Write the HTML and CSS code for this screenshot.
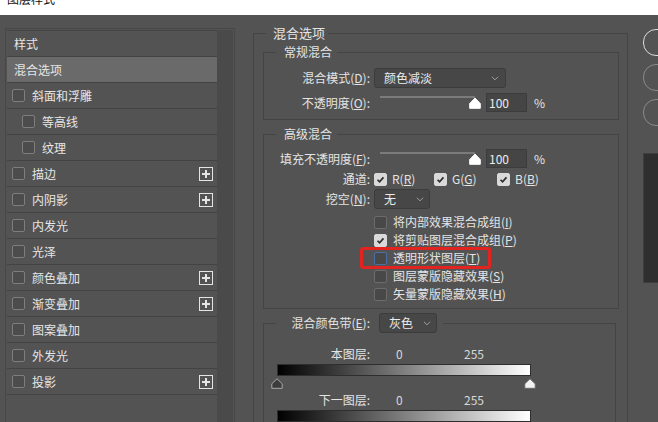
FILE: index.html
```html
<!DOCTYPE html>
<html lang="zh-CN">
<head>
<meta charset="utf-8">
<title>图层样式</title>
<link rel="stylesheet" href="styles.css">
</head>
<body>
<div class="titlebar"><div class="title">图层样式</div></div>
<div class="dialog">
  <aside class="styles-panel">
    <div class="list">
      <div class="row header">样式</div>
      <div class="row selected">混合选项</div>
      <div class="row"><span class="cb"></span><span class="lbl">斜面和浮雕</span></div>
      <div class="row sub"><span class="cb"></span><span class="lbl">等高线</span></div>
      <div class="row sub"><span class="cb"></span><span class="lbl">纹理</span></div>
      <div class="row"><span class="cb"></span><span class="lbl">描边</span><svg class="plus" viewBox="0 0 14 14"><rect x="0.5" y="0.5" width="13" height="13"/><path d="M3 7H11M7 3V11"/></svg></div>
      <div class="row"><span class="cb"></span><span class="lbl">内阴影</span><svg class="plus" viewBox="0 0 14 14"><rect x="0.5" y="0.5" width="13" height="13"/><path d="M3 7H11M7 3V11"/></svg></div>
      <div class="row"><span class="cb"></span><span class="lbl">内发光</span></div>
      <div class="row"><span class="cb"></span><span class="lbl">光泽</span></div>
      <div class="row"><span class="cb"></span><span class="lbl">颜色叠加</span><svg class="plus" viewBox="0 0 14 14"><rect x="0.5" y="0.5" width="13" height="13"/><path d="M3 7H11M7 3V11"/></svg></div>
      <div class="row"><span class="cb"></span><span class="lbl">渐变叠加</span><svg class="plus" viewBox="0 0 14 14"><rect x="0.5" y="0.5" width="13" height="13"/><path d="M3 7H11M7 3V11"/></svg></div>
      <div class="row"><span class="cb"></span><span class="lbl">图案叠加</span></div>
      <div class="row"><span class="cb"></span><span class="lbl">外发光</span></div>
      <div class="row"><span class="cb"></span><span class="lbl">投影</span><svg class="plus" viewBox="0 0 14 14"><rect x="0.5" y="0.5" width="13" height="13"/><path d="M3 7H11M7 3V11"/></svg></div>
    </div>
    <div class="scroll"></div>
  </aside>

  <main class="options">
    <fieldset class="fs-main">
      <legend class="lg-main">混合选项</legend>

      <fieldset class="fs fs-normal">
        <legend class="lg">常规混合</legend>
        <div class="frow r-mode">
          <span class="flabel">混合模式(<u>D</u>):</span>
          <div class="select sel-mode"><span>颜色减淡</span><svg class="chev" viewBox="0 0 9 5"><polyline points="1,0.5 4.5,4 8,0.5"/></svg></div>
        </div>
        <div class="frow r-num">
          <span class="flabel">不透明度(<u>O</u>):</span>
          <div class="slider"><div class="track"></div><svg class="thumb" viewBox="0 0 12 12"><path d="M6 1 L11.3 6.6 V11.3 H0.7 V6.6 Z"/></svg></div>
          <div class="num">100</div>
          <span class="pct">%</span>
        </div>
      </fieldset>

      <fieldset class="fs fs-adv">
        <legend class="lg">高级混合</legend>
        <div class="frow r-num r-fill">
          <span class="flabel">填充不透明度(<u>F</u>):</span>
          <div class="slider"><div class="track"></div><svg class="thumb" viewBox="0 0 12 12"><path d="M6 1 L11.3 6.6 V11.3 H0.7 V6.6 Z"/></svg></div>
          <div class="num">100</div>
          <span class="pct">%</span>
        </div>
        <div class="frow r-chan">
          <span class="flabel">通道:</span>
          <div class="chans">
            <span class="chan"><span class="ck on"><svg viewBox="0 0 13 13"><path d="M3 6.8 L5.4 9.2 L10 4"/></svg></span><span>R(<u>R</u>)</span></span>
            <span class="chan"><span class="ck on"><svg viewBox="0 0 13 13"><path d="M3 6.8 L5.4 9.2 L10 4"/></svg></span><span>G(<u>G</u>)</span></span>
            <span class="chan"><span class="ck on"><svg viewBox="0 0 13 13"><path d="M3 6.8 L5.4 9.2 L10 4"/></svg></span><span>B(<u>B</u>)</span></span>
          </div>
        </div>
        <div class="frow r-knock">
          <span class="flabel">挖空(<u>N</u>):</span>
          <div class="select sel-knock"><span>无</span><svg class="chev" viewBox="0 0 9 5"><polyline points="1,0.5 4.5,4 8,0.5"/></svg></div>
        </div>
        <div class="cblist">
          <div class="cbrow"><span class="ck"></span><span>将内部效果混合成组(<u>I</u>)</span></div>
          <div class="cbrow"><span class="ck on"><svg viewBox="0 0 13 13"><path d="M3 6.8 L5.4 9.2 L10 4"/></svg></span><span>将剪贴图层混合成组(<u>P</u>)</span></div>
          <div class="cbrow marked"><span class="ck focus"></span><span>透明形状图层(<u>T</u>)</span><span class="highlight"></span></div>
          <div class="cbrow"><span class="ck"></span><span>图层蒙版隐藏效果(<u>S</u>)</span></div>
          <div class="cbrow"><span class="ck"></span><span>矢量蒙版隐藏效果(<u>H</u>)</span></div>
        </div>
      </fieldset>

      <fieldset class="fs fs-band">
        <legend class="lg-band">
          <span class="blabel">混合颜色带(<u>E</u>):</span>
          <span class="select sel-band"><span>灰色</span><svg class="chev" viewBox="0 0 9 5"><polyline points="1,0.5 4.5,4 8,0.5"/></svg></span>
        </legend>
        <div class="frow r-val">
          <span class="flabel">本图层:</span>
          <span class="v0">0</span><span class="v255">255</span>
        </div>
        <div class="gbar"></div>
        <div class="handles">
          <svg class="h-dark" viewBox="0 0 12 11"><path d="M6 0.8 L11.2 5.8 V10.3 H0.8 V5.8 Z"/></svg>
          <svg class="h-light" viewBox="0 0 12 11"><path d="M6 0.8 L11.2 5.8 V10.3 H0.8 V5.8 Z"/></svg>
        </div>
        <div class="frow r-val r-val2">
          <span class="flabel">下一图层:</span>
          <span class="v0">0</span><span class="v255">255</span>
        </div>
        <div class="gbar"></div>
      </fieldset>
    </fieldset>
  </main>

  <div class="actions">
    <div class="btn default" role="button" aria-label="确定"></div>
    <div class="btn" role="button" aria-label="取消"></div>
    <div class="btn" role="button" aria-label="新建样式"></div>
    <div class="preview"></div>
  </div>
</div>
</body>
</html>
```
FILE: styles.css
```css
html, body {
  margin: 0;
  padding: 0;
  width: 658px;
  height: 422px;
  overflow: hidden;
  background: #535353;
}
body {
  font-family: "Noto Sans CJK SC", "Noto Sans", sans-serif;
  font-size: 12px;
  line-height: 16px;
  color: #e4e4e4;
}
u { text-underline-offset: 1px; }

.titlebar {
  height: 15px;
  background: #ffffff;
  overflow: hidden;
}
.title {
  margin-top: -8px;
  padding-left: 7px;
  line-height: 14px;
  color: #111;
  font-size: 12px;
}

.dialog {
  display: flex;
  align-items: flex-start;
}

/* left styles list */
.styles-panel {
  flex: 0 0 auto;
  display: flex;
  margin: 13px 0 0 5px;
  padding: 1px 0 0 1px;
  width: 227px;
  height: 400px;
  border: 1px solid #474747;
  border-bottom: none;
}
.list {
  width: 210px;
  border-top: 1px solid #444444;
  background: #535353;
}
.scroll {
  width: 16px;
  background: #4a4a4a;
}
.row {
  height: 25px;
  border-bottom: 1px solid #434343;
  display: flex;
  align-items: center;
  padding-left: 5px;
  color: #e6e6e6;
}
.row.header, .row.selected { padding-left: 7px; }
.row.selected { background: #6a6a6a; }
.row.sub { padding-left: 15px; }
.cb {
  width: 11px;
  height: 11px;
  border: 1px solid #7e7e7e;
  border-radius: 2px;
  background: #4c4c4c;
}
.lbl { margin-left: 7px; }
.plus {
  margin-left: auto;
  margin-right: 4px;
  width: 14px;
  height: 14px;
  fill: none;
  stroke: #e4e4e4;
}
.plus path { stroke-width: 2; }

/* main options */
.options {
  flex: 0 0 auto;
  margin-left: 18px;
  width: 375px;
}
fieldset {
  margin: 0;
  padding: 0;
  min-inline-size: 0;
  border: 1px solid #444444;
}
legend { padding: 0; line-height: 16px; }
.fs-main {
  margin-top: 10px;
  min-height: 420px;
  border-bottom: none;
}
.lg-main {
  margin-left: 12px;
  padding: 0 3px 0 7px;
  font-size: 13px;
}
.fs {
  margin: 3px 8px 0 9px;
}
.lg {
  margin-left: 12px;
  padding: 0 5px 0 8px;
}
.fs-normal { padding-bottom: 7px; }
.fs-adv { margin-top: 6px; padding-bottom: 5px; }
.fs-band { margin-top: 4px; margin-right: 11px; }

.frow {
  display: flex;
  align-items: center;
}
.flabel {
  width: 106px;
  text-align: right;
  flex: 0 0 auto;
}
.r-mode { margin-top: 8px; height: 20px; }
.r-num { margin-top: 5px; height: 19px; }
.r-fill { margin-top: 7px; }
.r-chan { margin-top: 2px; height: 18px; }
.r-knock { margin-top: 1px; height: 20px; }

.select {
  box-sizing: border-box;
  height: 20px;
  display: flex;
  align-items: center;
  background: #474747;
  border: 1px solid #3c3c3c;
  border-radius: 3px;
  color: #ececec;
}
.chev {
  width: 8px;
  height: 5px;
  margin-left: auto;
  fill: none;
  stroke: #ababab;
  stroke-width: 1;
}
.sel-mode {
  margin-left: 4px;
  width: 132px;
  padding: 0 6px 0 9px;
}
.sel-knock {
  margin-left: 4px;
  width: 56px;
  padding: 0 5px 0 9px;
}

.slider {
  position: relative;
  margin-left: 10px;
  width: 101px;
  height: 13px;
}
.track {
  width: 95px;
  height: 2px;
  background: #7b7b7b;
}
.thumb {
  position: absolute;
  right: 0;
  top: 1px;
  width: 12px;
  height: 12px;
  fill: #ffffff;
  stroke: #ffffff;
  stroke-linejoin: round;
}
.num {
  box-sizing: border-box;
  margin-left: 5px;
  width: 41px;
  height: 19px;
  padding-left: 2px;
  line-height: 17px;
  background: #454545;
  border: 1px solid #3c3c3c;
  color: #ececec;
}
.pct { margin-left: 7px; }

.chans {
  margin-left: 4px;
  display: grid;
  grid-template-columns: 60px 63px auto;
}
.chan {
  display: flex;
  align-items: center;
}
.chan > span:last-child { margin-left: 5px; }

.ck {
  box-sizing: border-box;
  width: 13px;
  height: 13px;
  border: 1px solid #6c6c6c;
  border-radius: 2px;
  background: #484848;
  display: flex;
  flex: 0 0 auto;
}
.ck svg {
  width: 11px;
  height: 11px;
  fill: none;
  stroke: #2c2c2c;
  stroke-width: 2;
}
.ck.on {
  background: #d9d9d9;
  border-color: #d9d9d9;
}
.ck.focus { border-color: #4a6ea8; }

.cblist { margin-top: 4px; }
.cbrow {
  height: 18px;
  display: flex;
  align-items: center;
  padding-left: 110px;
}
.cbrow > span:nth-child(2) { margin-left: 6px; }
.cbrow.marked { position: relative; }
.highlight {
  position: absolute;
  left: 96px;
  top: -2px;
  width: 131px;
  height: 22px;
  box-sizing: border-box;
  border: 3px solid #e1241f;
  border-radius: 3px;
}

.lg-band {
  margin-left: 12px;
  padding: 0 6px;
  display: flex;
  align-items: center;
}
.blabel {
  width: 88px;
  text-align: right;
}
.sel-band {
  margin-left: 9px;
  width: 58px;
  padding: 0 5px 0 9px;
}
.r-val {
  margin-top: 13px;
  height: 16px;
  color: #d8d8d8;
}
.r-val .flabel { color: #e4e4e4; }
.r-val2 { margin-top: 3px; }
.v0 { margin-left: 26px; width: 68px; }
.gbar {
  box-sizing: border-box;
  margin: 2px 0 0 13px;
  width: 254px;
  height: 12px;
  border: 1px solid #2e2e2e;
  background: linear-gradient(to right, #000000, #ffffff);
}
.handles {
  margin: 2px 0 0 7px;
  width: 265px;
  height: 11px;
  display: flex;
  justify-content: space-between;
}
.handles svg {
  width: 12px;
  height: 11px;
  stroke-linejoin: round;
}
.h-dark { fill: #3c3c3c; stroke: #a8a8a8; }
.h-light { fill: #f2f2f2; stroke: #6a6a6a; }

/* right buttons */
.actions {
  flex: 0 0 auto;
  margin: 14px 0 0 15px;
  width: 110px;
}
.btn {
  box-sizing: border-box;
  height: 27px;
  margin-bottom: 8px;
  border: 1px solid #8a8a8a;
  border-radius: 13px;
}
.btn.default { border-color: #dcdcdc; }
.preview {
  margin-top: 27px;
  height: 130px;
  box-sizing: border-box;
  background: #2e2e2e;
  border: 1px solid #3e3e3e;
}
```
